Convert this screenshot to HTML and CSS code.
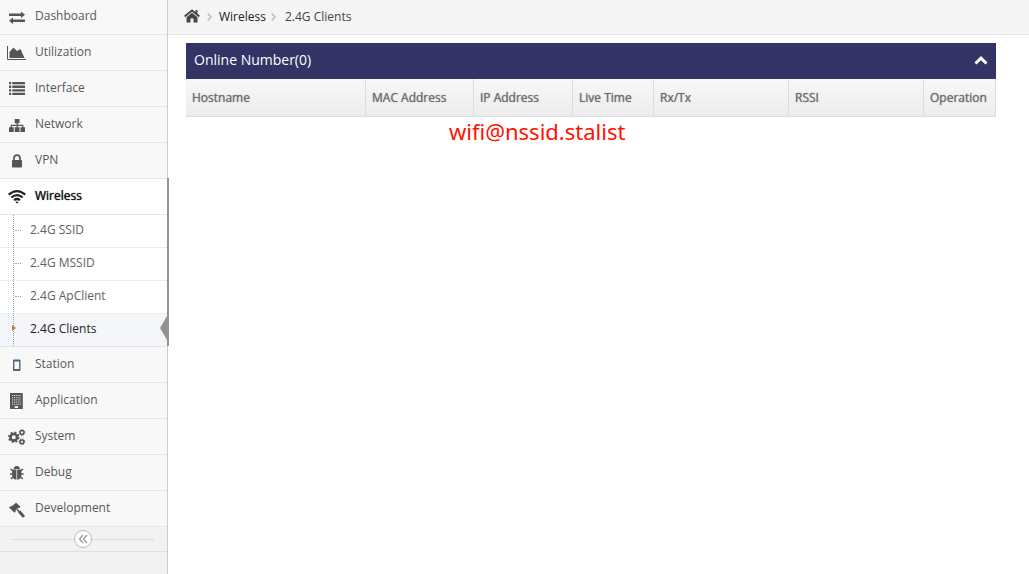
FILE: index.html
```html
<!DOCTYPE html>
<html lang="en">
<head>
<meta charset="utf-8">
<title>2.4G Clients</title>
<link rel="stylesheet" href="styles.css">
</head>
<body>
<div class="layout">
  <nav class="sidebar" aria-label="Main menu">
    <ul class="menu">
      <li><a class="menu-link" href="#"><svg class="icon" viewBox="0 0 20 21"><path d="M2 7.500h12V5.500l4 3.300-4 3.200v-2H2zM18 13.500H6v-2l-4 3.200 4 3.300v-2h12z"/></svg>Dashboard</a></li>
      <li><a class="menu-link" href="#"><svg class="icon" viewBox="0 0 20 21"><path d="M.5 4v13.500H19" fill="none" stroke="#555"/><path d="M2.500 16v-6L6.500 5.500 10 9l3.500-2 4 9z"/></svg>Utilization</a></li>
      <li><a class="menu-link" href="#"><svg class="icon" viewBox="0 0 20 21"><path d="M2 4h2.200v2.300H2zm3.300 0H18v2.300H5.300zM2 7.600h2.200v2.300H2zm3.300 0H18v2.300H5.300zM2 11.200h2.200v2.300H2zm3.300 0H18v2.300H5.300zM2 14.800h2.200v2.300H2zm3.300 0H18v2.300H5.300z"/></svg>Interface</a></li>
      <li><a class="menu-link" href="#"><svg class="icon" viewBox="0 0 20 21"><path d="M7.700 5h4.800v4.300H7.700zM2 13.300h4.700V18H2zm5.700 0h4.800V18H7.700zm5.700 0H18V18h-4.600z"/><path d="M4.300 14v-2.600h11.500V14M10.200 8v6" fill="none" stroke="#555" stroke-width="1.200"/></svg>Network</a></li>
      <li><a class="menu-link" href="#"><svg class="icon" viewBox="0 0 20 21"><path d="M5.500 10h9q.5 0 .5.600v6q0 .800-.8.800H5.700q-.7 0-.7-.8v-6q0-.6.500-.6z"/><path d="M7 11V8.200a3 3 0 0 1 6 0V11" fill="none" stroke="#555" stroke-width="1.700"/></svg>VPN</a></li>
      <li class="open">
        <a class="menu-link current" href="#"><svg class="icon" viewBox="0 0 20 21"><path d="M1.700 8.600Q10 1.500 18.300 8.600M4.300 11.500Q10 6.600 15.700 11.500M7 14.200q3-2.400 6 0" fill="none" stroke="#222" stroke-width="2.200"/><path d="M8.300 15.900q1.700-1 3.400 0L10 17.600z"/></svg>Wireless</a>
        <ul class="submenu">
          <li><a class="sub-link" href="#">2.4G SSID</a></li>
          <li><a class="sub-link" href="#">2.4G MSSID</a></li>
          <li><a class="sub-link" href="#">2.4G ApClient</a></li>
          <li><a class="sub-link active" href="#" aria-current="page">2.4G Clients</a></li>
        </ul>
      </li>
      <li><a class="menu-link" href="#"><svg class="icon" viewBox="0 0 20 21"><path fill="#4b6478" fill-rule="evenodd" d="M7 5.500h5.500q1 0 1 1V16q0 1-1 1H7q-1 0-1-1V6.500q0-1 1-1zm.4 2V15h4.700V7.500z"/></svg>Station</a></li>
      <li><a class="menu-link" href="#"><svg class="icon" viewBox="0 0 20 21"><path d="M3 3h12.800v16H3z"/><path d="M5 5.500h9M5 7.700h9M5 9.900h9M5 12.100h9M5 14.300h9" stroke="#dde3e8" stroke-width="1" stroke-dasharray="1.200 .9"/><path d="M7.700 16.200h3.400V18H7.700z" fill="#f8f8f8"/></svg>Application</a></li>
      <li><a class="menu-link" href="#"><svg class="icon" viewBox="0 0 20 21"><g fill="none" stroke="#555"><circle cx="6.800" cy="11.300" r="3.300" stroke-width="2.600"/><circle cx="6.800" cy="11.300" r="5" stroke-width="1.600" stroke-dasharray="1.960 1.967"/><circle cx="15" cy="6.500" r="1.900" stroke-width="1.500"/><circle cx="15" cy="6.500" r="2.800" stroke-width="1" stroke-dasharray="1.100 1.100"/><circle cx="15" cy="15.800" r="1.900" stroke-width="1.500"/><circle cx="15" cy="15.800" r="2.800" stroke-width="1" stroke-dasharray="1.100 1.100"/></g></svg>System</a></li>
      <li><a class="menu-link" href="#"><svg class="icon" viewBox="0 0 20 21"><path d="M6.800 7a3 3 0 0 1 6 0zM5.200 7.600h4.200v10.200Q5.200 17 5.200 13zm5 0h4.200V13q0 4-4.200 4.800z"/><path d="M3.500 7l2.500 2M3 12h3M3.800 17l2.800-2.500M16.100 7l-2.500 2M16.600 12h-3M15.800 17l-2.800-2.500" stroke="#555" stroke-width="1.400" fill="none"/></svg>Debug</a></li>
      <li><a class="menu-link" href="#"><svg class="icon" viewBox="0 0 20 21"><path d="M9 4.500l4.500 4.300-1.200 1.200-1-.2-2.800 2.800.2 1-1.200 1.200L2 9.500l1.200-1.200 1 .3L8 5.700z"/><path d="M10 11.500l6.800 7" fill="none" stroke="#555" stroke-width="1.600"/><path d="M12.300 13.500l4.600 5.400" fill="none" stroke="#555" stroke-width="3"/></svg>Development</a></li>
    </ul>
    <div class="collapse"><button class="collapse-btn" type="button" aria-label="Collapse menu"><svg viewBox="0 0 10 10" width="10" height="10"><path d="M5 1L1.500 5 5 9M9 1L5.500 5 9 9" fill="none" stroke="#999" stroke-width="1.300"/></svg></button></div>
  </nav>
  <main class="main">
    <nav class="breadcrumb" aria-label="Breadcrumb">
      <a class="home" href="#" aria-label="Home"><svg viewBox="0 0 16 14" width="16" height="14"><path d="M8 3.700l5.500 4.500V13.500H9.500v-4h-3v4h-4V8.200z"/><path d="M.6 7.500L8 1.400l7.400 6.100M12.500 1v4" fill="none" stroke="#444" stroke-width="1.900"/></svg></a>
      <svg class="sep" viewBox="0 0 5 8"><path d="M.7.500L4.200 4 .7 7.500" fill="none" stroke="#b2b6bf" stroke-width="1.300"/></svg>
      <a class="crumb" href="#">Wireless</a>
      <svg class="sep sep-next" viewBox="0 0 5 8"><path d="M.7.500L4.200 4 .7 7.500" fill="none" stroke="#b2b6bf" stroke-width="1.300"/></svg>
      <span class="here">2.4G Clients</span>
    </nav>
    <section class="panel">
      <header class="panel-head">
        <h1 class="panel-title">Online Number(0)</h1>
        <button class="fold" type="button" aria-label="Collapse panel"><svg viewBox="0 0 14 9" width="14" height="9"><path d="M1.500 7.500L7 2.200l5.500 5.300" fill="none" stroke="#fff" stroke-width="3"/></svg></button>
      </header>
      <table class="clients">
        <colgroup><col class="c-host"><col class="c-mac"><col class="c-ip"><col class="c-live"><col class="c-rate"><col class="c-rate"><col class="c-op"></colgroup>
        <thead><tr><th>Hostname</th><th>MAC Address</th><th>IP Address</th><th>Live Time</th><th>Rx/Tx</th><th>RSSI</th><th>Operation</th></tr></thead>
      </table>
      <p class="note">wifi@nssid.stalist</p>
    </section>
  </main>
</div>
</body>
</html>
```
FILE: styles.css
```css
* { box-sizing: border-box; }
body {
  margin: 0;
  font: 12px/20px "Open Sans", "Noto Sans", sans-serif;
  color: #444;
  background: #fff;
}
a { color: inherit; text-decoration: none; }
ul { margin: 0; padding: 0; list-style: none; }
button { padding: 0; border: 0; background: none; cursor: pointer; }

.layout { display: flex; min-height: 100vh; overflow: hidden; }

.sidebar {
  flex: none;
  width: 168px;
  background: #f2f2f2;
  border-right: 1px solid #ccc;
}
.menu { margin-top: -1px; }
.menu-link {
  display: flex;
  align-items: center;
  gap: 8px;
  height: 36px;
  padding: 0 7px 2px;
  color: #585858;
  background: #f8f8f8;
  border-bottom: 1px solid #e5e5e5;
}
.icon { width: 20px; height: 21px; margin-top: 2px; fill: #555; }
.current { color: #111; background: #fff; text-shadow: 0 0 1px currentColor; }
.current .icon { fill: #222; }

.open { position: relative; }
.open::after {
  content: "";
  position: absolute;
  top: -1px;
  right: -2px;
  bottom: 1px;
  width: 2px;
  background: #939393;
}
.submenu {
  position: relative;
  background: #fff;
  border-bottom: 1px solid #e5e5e5;
}
.submenu::before {
  content: "";
  position: absolute;
  z-index: 1;
  top: 0;
  bottom: 0;
  left: 13px;
  border-left: 1px dotted #7fa9c9;
}
.sub-link {
  position: relative;
  display: block;
  height: 33px;
  padding: 5px 0 0 30px;
  color: #616161;
  border-bottom: 1px dotted #dcdcdc;
}
.submenu li:last-child .sub-link { height: 32px; border-bottom: 0; }
.sub-link::before {
  content: "";
  position: absolute;
  top: 15px;
  left: 15px;
  width: 6px;
  border-top: 1px dotted #7fa9c9;
}
.sub-link.active { color: #222; background: #f5f6fa; }
.sub-link.active::before {
  z-index: 2;
  top: 11px;
  left: 12px;
  width: 0;
  border: 3px solid transparent;
  border-left: 4px solid #c8752d;
  border-right: 0;
}
.sub-link.active::after {
  content: "";
  position: absolute;
  top: 2px;
  right: 0;
  border: 12px solid transparent;
  border-right: 7px solid #939393;
  border-left: 0;
}

.collapse {
  display: flex;
  align-items: center;
  height: 25px;
  padding: 0 13px 0 11px;
  border-bottom: 1px solid #e0e0e0;
}
.collapse::before, .collapse::after {
  content: "";
  flex: 1;
  border-top: 1px solid #ddd;
}
.collapse-btn {
  display: flex;
  align-items: center;
  justify-content: center;
  width: 18px;
  height: 18px;
  background: #fff;
  border: 1px solid #bbb;
  border-radius: 50%;
}

.main { flex: 1; min-width: 0; }
.breadcrumb {
  display: flex;
  align-items: center;
  height: 35px;
  padding: 0 16px;
  background: #f5f5f5;
  border-bottom: 1px solid #e5e5e5;
}
.home { display: flex; padding-bottom: 2px; fill: #444; }
.sep { width: 5px; height: 8px; margin: 0 7px; }
.sep-next { margin: 0 9px 0 5px; }
.crumb { color: #222; }

.panel { margin: 8px 33px 0 18px; }
.panel-head {
  display: flex;
  align-items: center;
  justify-content: space-between;
  height: 36px;
  padding: 0 8px 2px;
  color: #fff;
  background: #333366;
}
.panel-title { margin: 0; font-size: 14px; font-weight: 400; }
.fold { display: flex; }
.clients { width: 100%; table-layout: fixed; border-collapse: separate; border-spacing: 0; }
.c-host { width: 180px; }
.c-mac { width: 108px; }
.c-ip { width: 99px; }
.c-live { width: 81px; }
.c-rate { width: 135px; }
.c-op { width: 72px; }
.clients th {
  height: 38px;
  padding: 0 6px;
  text-align: left;
  white-space: nowrap;
  font-weight: 400;
  text-shadow: 0 0 1px currentColor;
  color: #707070;
  background: linear-gradient(#f8f8f8, #ececec);
  border-right: 1px solid #ddd;
  border-bottom: 1px solid #ddd;
}
.note {
  margin: 0 0 0 263px;
  font-family: "Noto Sans", "Open Sans", sans-serif;
  font-size: 22px;
  line-height: 28px;
  font-variant-ligatures: none;
  color: #ff1100;
}
```
